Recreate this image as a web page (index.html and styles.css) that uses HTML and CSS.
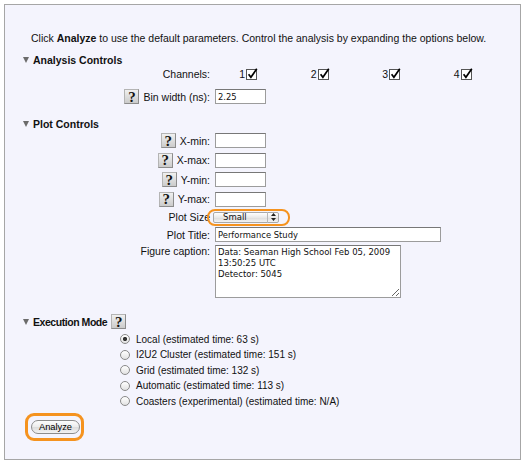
FILE: index.html
```html
<!DOCTYPE html>
<html>
<head>
<meta charset="utf-8">
<title>Analysis</title>
<link rel="stylesheet" href="styles.css">
</head>
<body>
<div class="panel">
  <p class="intro">Click <b>Analyze</b> to use the default parameters. Control the analysis by expanding the options below.</p>

  <div class="heading"><span class="tri"></span>Analysis Controls</div>
  <div class="row channels">
    <div class="label">Channels:</div>
    <div class="chans">
      <span class="ch">1<span class="cb"><svg width="12" height="12" viewBox="0 0 12 12"><rect x="0.5" y="1.5" width="10" height="10" fill="#fff" stroke="#555"/><path d="M2.6 6.2 L4.9 9.2 L10.8 0.8" fill="none" stroke="#000" stroke-width="1.7"/></svg></span></span>
      <span class="ch">2<span class="cb"><svg width="12" height="12" viewBox="0 0 12 12"><rect x="0.5" y="1.5" width="10" height="10" fill="#fff" stroke="#555"/><path d="M2.6 6.2 L4.9 9.2 L10.8 0.8" fill="none" stroke="#000" stroke-width="1.7"/></svg></span></span>
      <span class="ch">3<span class="cb"><svg width="12" height="12" viewBox="0 0 12 12"><rect x="0.5" y="1.5" width="10" height="10" fill="#fff" stroke="#555"/><path d="M2.6 6.2 L4.9 9.2 L10.8 0.8" fill="none" stroke="#000" stroke-width="1.7"/></svg></span></span>
      <span class="ch">4<span class="cb"><svg width="12" height="12" viewBox="0 0 12 12"><rect x="0.5" y="1.5" width="10" height="10" fill="#fff" stroke="#555"/><path d="M2.6 6.2 L4.9 9.2 L10.8 0.8" fill="none" stroke="#000" stroke-width="1.7"/></svg></span></span>
    </div>
  </div>
  <div class="row bin">
    <div class="label"><span class="help">?</span>Bin width (ns):</div>
    <input class="text" type="text" value="2.25">
  </div>

  <div class="heading plot"><span class="tri"></span>Plot Controls</div>
  <div class="row r">
    <div class="label"><span class="help">?</span>X-min:</div>
    <input class="text" type="text" value="">
  </div>
  <div class="row r">
    <div class="label"><span class="help">?</span>X-max:</div>
    <input class="text" type="text" value="">
  </div>
  <div class="row r">
    <div class="label"><span class="help">?</span>Y-min:</div>
    <input class="text" type="text" value="">
  </div>
  <div class="row r">
    <div class="label"><span class="help">?</span>Y-max:</div>
    <input class="text" type="text" value="">
  </div>
  <div class="row size">
    <div class="label">Plot Size</div>
    <span class="select-wrap">
      <select class="select"><option>Small</option><option>Medium</option><option>Large</option></select>
      <span class="arrows"><svg width="5" height="8" viewBox="0 0 5 8"><path d="M0 3 L2.5 0 L5 3 Z M0 5 L2.5 8 L5 5 Z" fill="#222"/></svg></span>
    </span>
  </div>
  <div class="row title">
    <div class="label">Plot Title:</div>
    <input class="text wide" type="text" value="Performance Study">
  </div>
  <div class="row caption">
    <div class="label">Figure caption:</div>
    <textarea class="area">Data: Seaman High School Feb 05, 2009
13:50:25 UTC
Detector: 5045</textarea>
  </div>

  <div class="heading exec"><span class="tri"></span><span class="exec-text">Execution Mode</span><span class="help">?</span></div>
  <div class="radios">
    <label class="radio"><span class="rb on"></span>Local (estimated time: 63 s)</label>
    <label class="radio"><span class="rb"></span>I2U2 Cluster (estimated time: 151 s)</label>
    <label class="radio"><span class="rb"></span>Grid (estimated time: 132 s)</label>
    <label class="radio"><span class="rb"></span>Automatic (estimated time: 113 s)</label>
    <label class="radio"><span class="rb"></span>Coasters (experimental) (estimated time: N/A)</label>
  </div>
  <div class="submit">
    <span class="btn-wrap"><button class="btn" type="button">Analyze</button></span>
  </div>
</div>
</body>
</html>
```

FILE: styles.css
```css
* { box-sizing: border-box; }

body {
  margin: 0;
  background: #ffffff;
  font-family: "Liberation Sans", Arial, sans-serif;
  font-size: 10.5px;
  color: #111;
}

.panel {
  margin: 4px;
  width: 517px;
  height: 456px;
  border: 1px solid #a6a6a6;
  background: #f4f4fd;
  padding-top: 26px;
}

.intro {
  margin: 0 0 0 26px;
  line-height: 14px;
}

.heading {
  display: flex;
  align-items: center;
  height: 14px;
  margin-top: 8px;
  padding-left: 18px;
  font-weight: bold;
}

.tri {
  width: 0;
  height: 0;
  border-left: 3px solid transparent;
  border-right: 3px solid transparent;
  border-top: 6px solid #6b6b6b;
  margin-right: 4px;
}

.heading.plot { margin-top: 11px; }
.heading.exec {
  margin-top: 15px;
  height: 16px;
  align-items: flex-end;
}
.heading.exec .tri { margin-bottom: 4px; }
.exec-text {
  letter-spacing: -0.45px;
  line-height: 13px;
}
.heading.exec .help { margin-left: 4px; margin-right: 0; }

.row {
  display: flex;
  align-items: center;
  height: 19px;
}

.label {
  flex: none;
  width: 205px;
  display: flex;
  justify-content: flex-end;
  align-items: center;
  white-space: nowrap;
}

.channels { height: 13px; }
.bin { margin-top: 7px; }
.r { height: 19.5px; }
.size { height: 16px; }
.caption {
  height: auto;
  align-items: flex-start;
  margin-top: 1px;
}
.caption .label { padding-top: 1px; line-height: 10px; }

.chans {
  display: grid;
  grid-template-columns: repeat(4, 71.5px);
  margin-left: 3px;
}

.ch {
  display: flex;
  justify-content: center;
  align-items: center;
  gap: 1px;
}

.cb { display: inline-flex; }

.help {
  display: inline-flex;
  align-items: center;
  justify-content: center;
  width: 15px;
  height: 15px;
  margin-right: 4px;
  background: linear-gradient(#f0f0f0, #cbcbcb);
  border: 1px solid #b4b4b4;
  border-right-color: #8c8c8c;
  border-bottom-color: #8c8c8c;
  font: bold 15px "Liberation Serif", serif;
  color: #111;
  line-height: 1;
  padding-top: 1px;
}

.text {
  width: 51px;
  height: 15px;
  margin: 0 0 0 5px;
  padding: 0 2px;
  border: 1px solid #9c9c9c;
  border-top-color: #777;
  background: #fff;
  font: 8.4px "DejaVu Sans", sans-serif;
  color: #111;
  outline: none;
}

.text.wide { width: 226px; }

.area {
  width: 186px;
  height: 53px;
  margin: 0 0 0 5px;
  padding: 1px 2px;
  border: 1px solid #9c9c9c;
  border-top-color: #777;
  background: #fff;
  font: 8.5px/11px "DejaVu Sans", sans-serif;
  color: #111;
  resize: both;
  outline: none;
}

.select-wrap {
  position: relative;
  display: inline-flex;
  margin-left: 3px;
}

.select-wrap::before {
  content: "";
  position: absolute;
  left: -6px;
  top: -3px;
  right: -11px;
  bottom: -3px;
  border: 2.5px solid #f5931f;
  border-radius: 8px;
  pointer-events: none;
}

.select {
  appearance: none;
  -webkit-appearance: none;
  width: 66px;
  height: 11px;
  margin: 0;
  padding: 0 0 0 9px;
  border: 1px solid #a9a9a9;
  border-radius: 2px;
  background: linear-gradient(#ffffff, #e9e9e9 50%, #dcdcdc 51%, #f3f3f3);
  font: 8.5px "DejaVu Sans", sans-serif;
  line-height: 9px;
  color: #111;
  outline: none;
}

.arrows {
  position: absolute;
  right: 0;
  top: 0;
  bottom: 0;
  width: 12px;
  display: flex;
  align-items: center;
  justify-content: center;
  border-left: 1px solid #b8b8b8;
  pointer-events: none;
}

.radios {
  margin-top: 2.5px;
  padding-left: 115px;
  font-size: 10px;
}

.radio {
  display: flex;
  align-items: center;
  height: 15.5px;
}

.rb {
  width: 10px;
  height: 10px;
  margin-right: 6px;
  border-radius: 50%;
  border: 1px solid #8a8a8a;
  background: linear-gradient(#ffffff, #e2e2e2);
}

.rb.on {
  background: radial-gradient(circle, #333 0 1.8px, transparent 2.4px), linear-gradient(#ffffff, #e2e2e2);
}

.submit {
  margin-top: 11px;
  padding-left: 26px;
}

.btn-wrap {
  position: relative;
  display: inline-flex;
}

.btn-wrap::before {
  content: "";
  position: absolute;
  left: -6px;
  top: -7px;
  right: -4px;
  bottom: -7px;
  border: 3px solid #f5931f;
  border-radius: 9px;
  pointer-events: none;
}

.btn {
  width: 49px;
  height: 14px;
  margin: 0;
  padding: 0;
  border: 1px solid #8c8c8c;
  border-radius: 7px;
  background: linear-gradient(#fdfdfd, #ececec 50%, #dcdcdc 51%, #f2f2f2);
  font: 9.3px "Liberation Sans", Arial, sans-serif;
  color: #000;
  line-height: 12px;
}
```
